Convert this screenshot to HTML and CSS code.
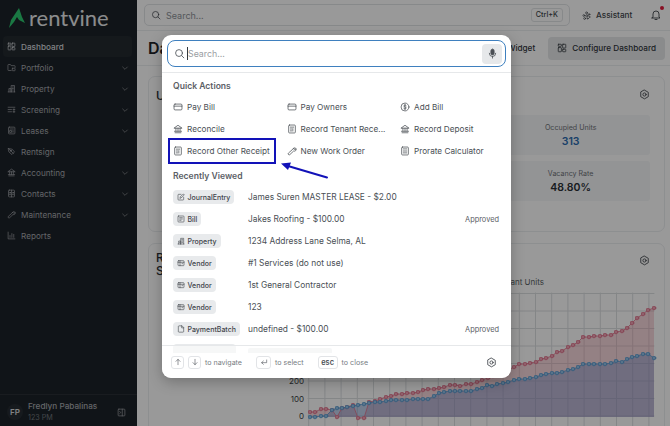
FILE: index.html
```html
<!DOCTYPE html>
<html lang="en">
<head>
  <meta charset="UTF-8">
  <title>Rentvine Dashboard</title>
  <link rel="stylesheet" href="styles.css">
</head>
<body>
  <svg class="icon-defs" width="0" height="0">
    <symbol id="i-search" viewBox="0 0 24 24"><circle cx="11" cy="11" r="7.5"/><path d="M17 17l4.5 4.5"/></symbol>
    <symbol id="i-dash" viewBox="0 0 24 24"><rect x="3" y="3" width="7.5" height="5" rx="1"/><rect x="13.5" y="3" width="7.5" height="9" rx="1"/><rect x="3" y="11" width="7.5" height="10" rx="1"/><rect x="13.5" y="15" width="7.5" height="6" rx="1"/></symbol>
    <symbol id="i-folder" viewBox="0 0 24 24"><path d="M11 20H4a1.500 1.500 0 0 1-1.500-1.500v-13A1.500 1.500 0 0 1 4 4h5l2 3h9a1.500 1.500 0 0 1 1.500 1.500V12"/><rect x="14" y="14" width="7.500" height="6.500" rx="1"/></symbol>
    <symbol id="i-building" viewBox="0 0 24 24"><path d="M3 21h18M5 21v-9h6v9M11 21V4h9v17M14 8h3M14 12h3M14 16h3M7.500 16h1"/></symbol>
    <symbol id="i-sliders" viewBox="0 0 24 24"><path d="M3 6h18M3 12h9M3 18h9M16 12h5M16 18h5M18.500 10v4M18.500 16v4"/></symbol>
    <symbol id="i-lease" viewBox="0 0 24 24"><rect x="4" y="3" width="17" height="18" rx="2"/><path d="M8 8h9M8 12h4v5H8zM15 13h2M15 16h2"/></symbol>
    <symbol id="i-sign" viewBox="0 0 24 24"><path d="M4 4l10 2 6 7-7 7-7-6zM9 9l8 8M4 4l5 5"/><circle cx="10" cy="10" r="1.500"/></symbol>
    <symbol id="i-bank" viewBox="0 0 24 24"><path d="M3 9.500L12 3l9 6.500zM5 21h14M3.500 17.500h17M7 10v7M12 10v7M17 10v7"/></symbol>
    <symbol id="i-book" viewBox="0 0 24 24"><rect x="4" y="3" width="16" height="18" rx="2"/><path d="M12 3v18"/><circle cx="8" cy="10" r="1.500"/><circle cx="16" cy="10" r="1.500"/><path d="M6 15h4M14 15h4"/></symbol>
    <symbol id="i-wrench" viewBox="0 0 24 24"><path d="M14.500 6.500a4.500 4.500 0 0 1 6-1.500l-3 3 1.500 1.500 3-3a4.500 4.500 0 0 1-6 5.500L7 20.500a2 2 0 0 1-3.500-3.500l9.500-8.500a4.500 4.500 0 0 1 1.500-2z"/></symbol>
    <symbol id="i-chart" viewBox="0 0 24 24"><path d="M3 3v18h18M8 17v-5M13 17V7M18 17v-8"/></symbol>
    <symbol id="i-chev" viewBox="0 0 24 24"><path d="M5 9l7 7 7-7"/></symbol>
    <symbol id="i-panel" viewBox="0 0 24 24"><rect x="3" y="3" width="18" height="18" rx="2"/><path d="M14 3v18M7 9l3 3-3 3"/></symbol>
    <symbol id="i-spark" viewBox="0 0 24 24"><circle cx="12" cy="5" r="2.500"/><circle cx="19" cy="9" r="2"/><circle cx="5" cy="12" r="2.500"/><circle cx="13" cy="13" r="3"/><circle cx="7" cy="20" r="2.500"/><circle cx="15" cy="20" r="1.500"/><circle cx="20" cy="16" r="1"/></symbol>
    <symbol id="i-bell" viewBox="0 0 24 24"><path d="M6 16V10a6 6 0 0 1 12 0v6l2 2H4zM10 21h4"/></symbol>
    <symbol id="i-gear" viewBox="0 0 24 24"><path d="M12 2.500l8.200 4.700v9.600L12 21.500l-8.200-4.700V7.200z"/><circle cx="12" cy="12" r="3.500"/></symbol>
    <symbol id="i-mic" viewBox="0 0 24 24"><rect x="8.500" y="2.500" width="7" height="12.500" rx="3.500" fill="currentColor"/><path d="M5 11.500a7 7 0 0 0 14 0M12 18.500V22"/></symbol>
    <symbol id="i-card" viewBox="0 0 24 24"><rect x="2.500" y="5" width="19" height="14" rx="2.500"/><path d="M2.500 10h19"/></symbol>
    <symbol id="i-receipt" viewBox="0 0 24 24"><rect x="4" y="2.500" width="16" height="19" rx="2"/><path d="M8 7.500h8M8 12h3M8 16.500h3M14 11v6"/></symbol>
    <symbol id="i-dollar" viewBox="0 0 24 24"><circle cx="12" cy="12" r="9.500"/><path d="M15 8.500c-1-1.500-6-1.500-6 1.200 0 3 6 1.600 6 4.600 0 2.700-5 2.700-6 1.200M12 5.500v13"/></symbol>
    <symbol id="i-calc" viewBox="0 0 24 24"><rect x="4" y="2.500" width="16" height="19" rx="2"/><path d="M8 7h8M8 12h8M8 16.500h8"/></symbol>
    <symbol id="i-edit" viewBox="0 0 24 24"><path d="M20 13v6a2 2 0 0 1-2 2H5a2 2 0 0 1-2-2V6a2 2 0 0 1 2-2h7M9 15l1-4 9-8 3 3-9 8z"/></symbol>
    <symbol id="i-bill" viewBox="0 0 24 24"><rect x="3" y="3" width="18" height="18" rx="2"/><path d="M8 8h8M8 12h8M8 16h4"/></symbol>
    <symbol id="i-vendor" viewBox="0 0 24 24"><rect x="3" y="5" width="18" height="15" rx="2"/><path d="M3 10h18M9 5v15M15 14h2"/></symbol>
    <symbol id="i-file" viewBox="0 0 24 24"><path d="M14 2.500H6a2 2 0 0 0-2 2v15a2 2 0 0 0 2 2h12a2 2 0 0 0 2-2V8.500zM14 2.500v6h6"/></symbol>
    <symbol id="i-up" viewBox="0 0 24 24"><path d="M12 20V4M6 10l6-6 6 6"/></symbol>
    <symbol id="i-down" viewBox="0 0 24 24"><path d="M12 4v16M6 14l6 6 6-6"/></symbol>
    <symbol id="i-enter" viewBox="0 0 24 24"><path d="M20 6v8H5M10 9l-5 5 5 5"/></symbol>
    <marker id="dot-red" viewBox="0 0 6 6" refX="3" refY="3" markerWidth="5" markerHeight="5" markerUnits="userSpaceOnUse"><circle cx="3" cy="3" r="2.200" class="dot-red"/></marker>
    <marker id="dot-blue" viewBox="0 0 6 6" refX="3" refY="3" markerWidth="5" markerHeight="5" markerUnits="userSpaceOnUse"><circle cx="3" cy="3" r="2.200" class="dot-blue"/></marker>
  </svg>

  <div class="app">
    <aside class="sidebar">
      <div class="logo">
        <svg class="logo-mark" viewBox="0 0 16 20"><path d="M10 0l3 9 3 6-6-3-2-3-3 5-5 6 2-8z"/></svg>
        <span>rentvine</span>
      </div>
      <nav class="nav">
        <a class="nav-item active"><svg class="ico"><use href="#i-dash"/></svg>Dashboard</a>
        <a class="nav-item"><svg class="ico"><use href="#i-folder"/></svg>Portfolio<svg class="chev"><use href="#i-chev"/></svg></a>
        <a class="nav-item"><svg class="ico"><use href="#i-building"/></svg>Property<svg class="chev"><use href="#i-chev"/></svg></a>
        <a class="nav-item"><svg class="ico"><use href="#i-sliders"/></svg>Screening<svg class="chev"><use href="#i-chev"/></svg></a>
        <a class="nav-item"><svg class="ico"><use href="#i-lease"/></svg>Leases<svg class="chev"><use href="#i-chev"/></svg></a>
        <a class="nav-item"><svg class="ico"><use href="#i-sign"/></svg>Rentsign</a>
        <a class="nav-item"><svg class="ico"><use href="#i-bank"/></svg>Accounting<svg class="chev"><use href="#i-chev"/></svg></a>
        <a class="nav-item"><svg class="ico"><use href="#i-book"/></svg>Contacts<svg class="chev"><use href="#i-chev"/></svg></a>
        <a class="nav-item"><svg class="ico"><use href="#i-wrench"/></svg>Maintenance<svg class="chev"><use href="#i-chev"/></svg></a>
        <a class="nav-item"><svg class="ico"><use href="#i-chart"/></svg>Reports</a>
      </nav>
      <div class="user">
        <div class="avatar">FP</div>
        <div class="user-text">
          <div class="user-name">Fredlyn Pabalinas</div>
          <div class="user-time">123 PM</div>
        </div>
        <svg class="ico"><use href="#i-panel"/></svg>
      </div>
    </aside>

    <main class="main">
      <header class="topbar">
        <div class="top-search">
          <svg class="ico"><use href="#i-search"/></svg>
          <span class="top-search-text">Search...</span>
          <kbd class="top-kbd">Ctrl+K</kbd>
        </div>
        <div class="assistant"><svg class="ico"><use href="#i-spark"/></svg>Assistant</div>
        <div class="bell"><svg class="ico-bell"><use href="#i-bell"/></svg></div>
      </header>

      <div class="page-head">
        <h1>Dashboard</h1>
        <span class="add-widget">Add Widget</span>
        <button class="configure"><svg class="ico-dash"><use href="#i-dash"/></svg>Configure Dashboard</button>
      </div>

      <div class="page-body">
        <section class="card stats-card">
          <div class="card-head">
            <h2>Unit Summary</h2>
            <svg class="ico-gear"><use href="#i-gear"/></svg>
          </div>
          <div class="tiles">
            <div class="tile"></div>
            <div class="tile"></div>
            <div class="tile"><div class="tile-label">Occupied Units</div><div class="tile-value blue">313</div></div>
            <div class="tile"></div>
            <div class="tile"></div>
            <div class="tile"><div class="tile-label">Vacancy Rate</div><div class="tile-value">48.80%</div></div>
          </div>
        </section>

        <section class="card chart-card">
          <div class="card-head">
            <h2>Rent<br>Stats</h2>
            <svg class="ico-gear"><use href="#i-gear"/></svg>
          </div>
          <div class="legend">Vacant Units</div>
          <svg class="chart" viewBox="149 286 516 140" width="516" height="140">
            <path class="grid" d="M308 293.500H654M308 311H654M308 328.500H654M308 346H654M308 363.500H654M308 381H654M308 398.500H654M308 416H654"/>
            <path class="grid" d="M308.700 293V426M324.900 293V426M341.100 293V426M357.300 293V426M373.500 293V426M389.700 293V426M405.900 293V426M422.100 293V426M438.300 293V426M454.500 293V426M470.700 293V426M486.900 293V426M503.100 293V426M519.300 293V426M535.500 293V426M551.700 293V426M567.900 293V426M584.100 293V426M600.300 293V426M616.500 293V426M632.700 293V426M648.900 293V426"/>
            <polygon class="area-red" points="310,417 310,412 315,412 321,409 326,409 332,410 337,417 342,408 347,407 353,405 358,418 364,418 369,402 375,401 380,399 386,397 391,396 396,394 402,394 407,393 413,393 418,392 423,390 428,389 434,389 439,388 444,387 450,385 455,385 460,386 466,384 471,384 477,382 482,380 488,378 493,376 498,375 503,372 508,370 514,367 519,364 525,364 530,363 536,362 541,359 546,358 552,356 557,352 562,351 568,347 573,345 578,342 583,337 589,337 594,336 600,336 605,335 611,335 616,332 622,331 627,328 632,323 637,318 643,314 648,310 654,308 654,417"/>
            <polygon class="area-blue" points="310,417 315,417 321,416 326,416 332,410 337,408 342,408 347,407 353,406 358,405 364,404 369,403 375,402 380,402 386,401 391,400 396,400 402,400 407,400 413,399 418,399 423,399 428,399 434,396 439,393 444,392 450,391 455,391 460,391 466,391 471,391 477,389 482,388 487,385 492,386 497,384 503,383 508,382 514,380 519,379 525,379 530,378 536,377 541,375 546,374 552,373 557,373 562,372 568,370 573,369 578,367 583,364 589,364 594,364 600,364 605,364 611,363 616,361 622,362 627,359 632,357 637,356 643,354 648,354 654,358 654,417"/>
            <polyline class="line-red" points="310,412 315,412 321,409 326,409 332,410 337,417 342,408 347,407 353,405 358,418 364,418 369,402 375,401 380,399 386,397 391,396 396,394 402,394 407,393 413,393 418,392 423,390 428,389 434,389 439,388 444,387 450,385 455,385 460,386 466,384 471,384 477,382 482,380 488,378 493,376 498,375 503,372 508,370 514,367 519,364 525,364 530,363 536,362 541,359 546,358 552,356 557,352 562,351 568,347 573,345 578,342 583,337 589,337 594,336 600,336 605,335 611,335 616,332 622,331 627,328 632,323 637,318 643,314 648,310 654,308"/>
            <polyline class="line-blue" points="310,417 315,417 321,416 326,416 332,410 337,408 342,408 347,407 353,406 358,405 364,404 369,403 375,402 380,402 386,401 391,400 396,400 402,400 407,400 413,399 418,399 423,399 428,399 434,396 439,393 444,392 450,391 455,391 460,391 466,391 471,391 477,389 482,388 487,385 492,386 497,384 503,383 508,382 514,380 519,379 525,379 530,378 536,377 541,375 546,374 552,373 557,373 562,372 568,370 573,369 578,367 583,364 589,364 594,364 600,364 605,364 611,363 616,361 622,362 627,359 632,357 637,356 643,354 648,354 654,358"/>
            <text class="axis" x="304" y="384" text-anchor="end">200</text>
            <text class="axis" x="304" y="402" text-anchor="end">100</text>
            <text class="axis" x="304" y="419" text-anchor="end">0</text>
          </svg>
        </section>
      </div>
    </main>
  </div>

  <div class="overlay"></div>

  <div class="palette">
    <div class="palette-search">
      <div class="palette-input">
        <svg class="ico-search"><use href="#i-search"/></svg>
        <span class="caret"></span>
        <span class="placeholder">Search...</span>
        <span class="mic"><svg class="ico-mic"><use href="#i-mic"/></svg></span>
      </div>
    </div>
    <div class="palette-body">
      <h3>Quick Actions</h3>
      <div class="actions">
        <div class="action"><svg class="ico-act"><use href="#i-card"/></svg>Pay Bill</div>
        <div class="action"><svg class="ico-act"><use href="#i-card"/></svg>Pay Owners</div>
        <div class="action"><svg class="ico-act"><use href="#i-dollar"/></svg>Add Bill</div>
        <div class="action"><svg class="ico-act"><use href="#i-bank"/></svg>Reconcile</div>
        <div class="action"><svg class="ico-act"><use href="#i-receipt"/></svg>Record Tenant Rece...</div>
        <div class="action"><svg class="ico-act"><use href="#i-bank"/></svg>Record Deposit</div>
        <div class="action"><svg class="ico-act"><use href="#i-receipt"/></svg>Record Other Receipt</div>
        <div class="action"><svg class="ico-act"><use href="#i-wrench"/></svg>New Work Order</div>
        <div class="action"><svg class="ico-act"><use href="#i-calc"/></svg>Prorate Calculator</div>
      </div>
      <h3 class="recent-title">Recently Viewed</h3>
      <div class="recent">
        <div class="row"><span class="chip-cell"><span class="chip"><svg class="ico-chip"><use href="#i-edit"/></svg>JournalEntry</span></span><span class="row-title">James Suren MASTER LEASE - $2.00</span></div>
        <div class="row"><span class="chip-cell"><span class="chip"><svg class="ico-chip"><use href="#i-bill"/></svg>Bill</span></span><span class="row-title">Jakes Roofing - $100.00</span><span class="row-status">Approved</span></div>
        <div class="row"><span class="chip-cell"><span class="chip"><svg class="ico-chip"><use href="#i-building"/></svg>Property</span></span><span class="row-title">1234 Address Lane Selma, AL</span></div>
        <div class="row"><span class="chip-cell"><span class="chip"><svg class="ico-chip"><use href="#i-vendor"/></svg>Vendor</span></span><span class="row-title">#1 Services (do not use)</span></div>
        <div class="row"><span class="chip-cell"><span class="chip"><svg class="ico-chip"><use href="#i-vendor"/></svg>Vendor</span></span><span class="row-title">1st General Contractor</span></div>
        <div class="row"><span class="chip-cell"><span class="chip"><svg class="ico-chip"><use href="#i-vendor"/></svg>Vendor</span></span><span class="row-title">123</span></div>
        <div class="row"><span class="chip-cell"><span class="chip"><svg class="ico-chip"><use href="#i-file"/></svg>PaymentBatch</span></span><span class="row-title">undefined - $100.00</span><span class="row-status">Approved</span></div>
      </div>
      <div class="row row-ghost"><span class="chip-cell"><span class="chip chip-ghost"></span></span><span class="ghost-line"></span></div>
    </div>
    <div class="palette-foot">
      <kbd class="key"><svg class="ico-key"><use href="#i-up"/></svg></kbd>
      <kbd class="key"><svg class="ico-key"><use href="#i-down"/></svg></kbd>
      <span class="hint">to navigate</span>
      <kbd class="key key-wide"><svg class="ico-key"><use href="#i-enter"/></svg></kbd>
      <span class="hint">to select</span>
      <kbd class="key key-esc">esc</kbd>
      <span class="hint">to close</span>
      <svg class="ico-gear foot-gear"><use href="#i-gear"/></svg>
    </div>
  </div>

  <!-- annotation drawn over the screenshot -->
  <div class="callout-box"></div>
  <svg class="callout-arrow" width="60" height="24" viewBox="0 0 60 24">
    <path d="M49 16.500L10 5" stroke="#1212b8" stroke-width="2" fill="none"/>
    <path d="M3 2.500L13 1.500 10 9z" fill="#1212b8"/>
  </svg>
</body>
</html>
```

FILE: styles.css
```css
* {
  margin: 0;
  padding: 0;
  box-sizing: border-box;
}

body {
  width: 670px;
  height: 426px;
  overflow: hidden;
  position: relative;
  font-family: Inter, "Liberation Sans", sans-serif;
  color: #2a2f35;
  background: #fff;
}

svg {
  fill: none;
  stroke: currentColor;
  stroke-width: 1.8;
  stroke-linecap: round;
  stroke-linejoin: round;
  flex: none;
}

.icon-defs {
  position: absolute;
}

.app {
  display: flex;
  height: 426px;
}

/* sidebar */
.sidebar {
  width: 137px;
  flex: none;
  display: flex;
  flex-direction: column;
  background: #1c2228;
  color: #a5a9ae;
}

.logo {
  height: 36px;
  display: flex;
  align-items: center;
  gap: 4px;
  padding: 0 0 0 9px;
  font-family: Lato, sans-serif;
  font-size: 22px;
  line-height: 36px;
  color: #e8eaec;
}

.logo-mark {
  width: 16px;
  height: 20px;
  fill: #2cc870;
  stroke: none;
}

.nav {
  display: flex;
  flex-direction: column;
  flex: 1;
  padding: 0 5px 0 3px;
}

.nav-item {
  height: 21px;
  display: flex;
  align-items: center;
  gap: 5px;
  padding-left: 4px;
  font-size: 8.2px;
  border-radius: 4px;
}

.nav-item.active {
  background: #232a30;
  color: #d8dbde;
  font-weight: 500;
}

.ico {
  width: 9px;
  height: 9px;
}

.chev {
  width: 8px;
  height: 8px;
  margin-left: auto;
  margin-right: 3px;
}

.user {
  height: 32px;
  display: flex;
  align-items: center;
  gap: 5px;
  padding: 3px 11px 0 7px;
  border-top: 1px solid #2a3036;
}

.avatar {
  width: 16px;
  height: 16px;
  border-radius: 50%;
  background: #262c32;
  font-size: 8px;
  font-weight: 600;
  line-height: 16px;
  text-align: center;
  color: #d8dbde;
}

.user-text {
  flex: 1;
}

.user-name {
  font-size: 8.2px;
  font-weight: 500;
  line-height: 11px;
}

.user-time {
  font-size: 7.2px;
  line-height: 11px;
  color: #71777d;
}

/* main */
.main {
  flex: 1;
  min-width: 0;
  background: #fff;
  display: flex;
  flex-direction: column;
}

.topbar {
  height: 31px;
  flex: none;
  display: flex;
  align-items: center;
  padding: 0 7px;
  border-bottom: 1px solid #eceef0;
}

.top-search {
  width: 426px;
  height: 22px;
  display: flex;
  align-items: center;
  gap: 5px;
  padding: 0 6px 0 6px;
  border: 1px solid #e2e4e7;
  border-radius: 5px;
  color: #8d9298;
  font-size: 9px;
}

.top-search .ico {
  width: 10px;
  height: 10px;
  color: #40454b;
}

.top-search-text {
  flex: 1;
}

.top-kbd {
  height: 14px;
  padding: 0 4px;
  border: 1px solid #e2e4e7;
  border-radius: 3px;
  font-family: Inter, sans-serif;
  font-size: 7.2px;
  line-height: 12px;
  font-weight: 500;
  color: #40454b;
}

.assistant {
  display: flex;
  align-items: center;
  gap: 5px;
  margin-left: 12px;
  font-size: 8.2px;
  font-weight: 500;
  color: #40454b;
}

.assistant .ico {
  width: 9px;
  height: 9px;
}

.bell {
  position: relative;
  margin-left: auto;
  height: 12px;
  margin-right: 1px;
  color: #40454b;
}

.bell::after {
  content: "";
  position: absolute;
  top: -3px;
  right: -2px;
  width: 4px;
  height: 4px;
  border-radius: 50%;
  background: #e3193b;
}

.ico-bell {
  display: block;
  width: 12px;
  height: 12px;
}

.page-head {
  height: 35px;
  flex: none;
  display: flex;
  align-items: center;
  padding: 0 5px 0 11px;
  border-bottom: 1px solid #eceef0;
}

.page-head h1 {
  flex: 1;
  font-size: 16px;
  font-weight: 600;
  color: #1f2429;
}

.add-widget {
  margin-right: 13px;
  font-size: 8.2px;
  font-weight: 500;
  color: #33383e;
}

.configure {
  height: 23px;
  display: flex;
  align-items: center;
  gap: 5px;
  padding: 0 9px;
  border: none;
  border-radius: 4px;
  background: #e6e8ea;
  font-family: Inter, sans-serif;
  font-size: 8.2px;
  font-weight: 500;
  color: #2f343a;
}

.ico-dash {
  width: 10px;
  height: 10px;
}

.page-body {
  flex: 1;
  min-height: 0;
  overflow: hidden;
  display: flex;
  flex-direction: column;
  gap: 11px;
  padding: 10px 5px 0 11px;
}

.card {
  flex: none;
  border: 1px solid #eceef0;
  border-radius: 7px;
  padding: 12px 14px 0 7px;
}

.stats-card {
  height: 156px;
}

.chart-card {
  height: 200px;
  padding-top: 7px;
  padding-right: 0;
  padding-left: 0;
}

.card-head {
  display: flex;
  justify-content: space-between;
  align-items: flex-start;
}

.chart-card .card-head {
  padding: 0 14px 0 7px;
}

.chart-card .ico-gear {
  margin-top: 4px;
}

.card-head h2 {
  font-size: 12px;
  font-weight: 500;
  line-height: 13px;
  color: #2a2f35;
}

.ico-gear {
  width: 11px;
  height: 11px;
  color: #3a3f45;
}

.tiles {
  display: grid;
  grid-template-columns: repeat(3, 1fr);
  gap: 6px 5px;
  margin: 13px 0 0 8px;
}

.tile {
  height: 40px;
  background: #f6f7f8;
  border-radius: 3px;
  text-align: center;
  padding-top: 7px;
}

.tile-label {
  font-size: 7.1px;
  line-height: 11px;
  color: #6d7278;
}

.tile-value {
  font-size: 10.5px;
  font-weight: 600;
  line-height: 17px;
  color: #2a2f35;
}

.tile-value.blue {
  color: #2c6cb0;
}

.legend {
  margin: 0 120px 0 0;
  text-align: right;
  font-size: 8px;
  line-height: 11px;
  color: #5a5f65;
}

.chart {
  display: block;
  margin-top: -2px;
}

.grid {
  stroke: #dcdfe2;
  stroke-width: 1;
}

.area-red {
  fill: rgba(225, 110, 130, 0.28);
  stroke: none;
}

.area-blue {
  fill: rgba(80, 125, 200, 0.36);
  stroke: none;
}

.line-red,
.line-blue {
  fill: none;
  stroke-width: 0.8;
}

.line-red {
  stroke: #e0708a;
  marker-start: url(#dot-red);
  marker-mid: url(#dot-red);
  marker-end: url(#dot-red);
}

.line-blue {
  stroke: #5a9ad0;
  marker-start: url(#dot-blue);
  marker-mid: url(#dot-blue);
  marker-end: url(#dot-blue);
}

.dot-red {
  fill: #f0a0b2;
  stroke: #e0708a;
  stroke-width: 1;
}

.dot-blue {
  fill: #90c0e6;
  stroke: #5a9ad0;
  stroke-width: 1;
}

.axis {
  font-family: Inter, sans-serif;
  font-size: 8px;
  fill: #3a3f45;
  stroke: none;
}

/* dimmed backdrop */
.overlay {
  position: absolute;
  inset: 0;
  background: rgba(0, 0, 0, 0.4);
}

/* command palette */
.palette {
  position: absolute;
  left: 162px;
  top: 35px;
  width: 349px;
  height: 343px;
  display: flex;
  flex-direction: column;
  background: #fff;
  border-radius: 9px;
  overflow: hidden;
  box-shadow: 0 4px 14px rgba(0, 0, 0, 0.25);
}

.palette-search {
  flex: none;
  height: 38px;
  padding: 5px 5px 0;
  border-bottom: 1px solid #e6e8ea;
}

.palette-input {
  height: 27px;
  display: flex;
  align-items: center;
  padding: 0 3px 0 6px;
  border: 1.5px solid #3f80bf;
  border-radius: 8px;
}

.ico-search {
  width: 11px;
  height: 11px;
  color: #4a4f55;
}

.caret {
  width: 1px;
  height: 13px;
  margin-left: 2px;
  background: #33383e;
}

.placeholder {
  flex: 1;
  font-size: 8.8px;
  color: #9a9ea3;
}

.mic {
  width: 20px;
  height: 20px;
  display: flex;
  align-items: center;
  justify-content: center;
  border-radius: 4px;
  background: #e6e8ea;
  color: #4a4f55;
}

.ico-mic {
  width: 11px;
  height: 11px;
}

.palette-body {
  flex: 1;
  min-height: 0;
  overflow: hidden;
  padding: 8px 11px 0;
  margin-bottom: -8px;
}

.palette-body h3 {
  font-size: 8.6px;
  font-weight: 600;
  line-height: 11px;
  color: #5b6066;
}

.actions {
  display: grid;
  grid-template-columns: repeat(3, 113.500px);
  grid-auto-rows: 22px;
  margin-top: 4px;
}

.action {
  display: flex;
  align-items: center;
  gap: 4px;
  font-size: 8.2px;
  color: #4a4f55;
  white-space: nowrap;
}

.ico-act {
  width: 10px;
  height: 10px;
  color: #4a4f55;
}

.recent-title {
  margin-top: 9px;
}

.recent {
  margin-top: 4px;
}

.row {
  height: 22px;
  display: flex;
  align-items: center;
  font-size: 8.4px;
  color: #4a4f55;
}

.chip-cell {
  width: 75px;
  flex: none;
}

.chip {
  display: inline-flex;
  align-items: center;
  gap: 2.500px;
  height: 14px;
  padding: 0 4px;
  border-radius: 4px;
  background: #e8eaec;
  font-size: 7px;
  font-weight: 500;
  color: #3f444a;
}

.chip-ghost {
  width: 63px;
  vertical-align: top;
}

.ghost-line {
  width: 84px;
  height: 6px;
  border-radius: 2px;
  background: #e8eaec;
}

.ico-chip {
  width: 8px;
  height: 8px;
}

.row-title {
  flex: 1;
}

.row-status {
  padding-right: 1px;
  font-size: 7.4px;
  color: #5b6066;
}

.palette-foot {
  flex: none;
  height: 33px;
  position: relative;
  display: flex;
  align-items: center;
  gap: 4px;
  padding: 0 14px 0 9px;
  border-top: 1px solid #e6e8ea;
  background: rgba(255, 255, 255, 0.6);
}

.key {
  width: 13px;
  height: 13px;
  display: flex;
  align-items: center;
  justify-content: center;
  border: 1px solid #e2e4e7;
  border-radius: 3px;
  font-family: Inter, sans-serif;
  font-size: 7.4px;
  font-weight: 600;
  color: #4a4f55;
}

.key-wide {
  width: 15px;
}

.key-esc {
  width: 20px;
}

.ico-key {
  width: 8px;
  height: 8px;
}

.hint {
  margin-right: 10px;
  font-size: 7.1px;
  color: #777c82;
}

.foot-gear {
  margin-left: auto;
}

/* annotation */
.callout-box {
  position: absolute;
  left: 168px;
  top: 138px;
  width: 108px;
  height: 26px;
  border: 2px solid #1212b8;
}

.callout-arrow {
  position: absolute;
  left: 278px;
  top: 161px;
  stroke: none;
}
```
